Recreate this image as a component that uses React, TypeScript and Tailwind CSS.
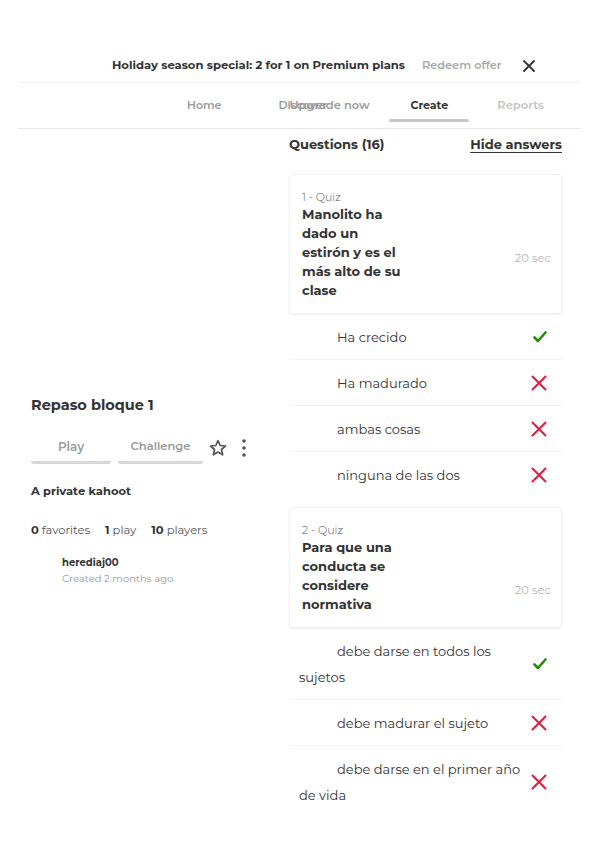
import React from 'react';

type Answer = { text: string; correct: boolean };
type Question = { n: number; title: string; timeClass: string; answers: Answer[] };

const questions: Question[] = [
  {
    n: 1,
    title: 'Manolito ha\ndado un\nestirón y es el\nmás alto de su\nclase',
    timeClass: 'mt-[28px]',
    answers: [
      { text: 'Ha crecido', correct: true },
      { text: 'Ha madurado', correct: false },
      { text: 'ambas cosas', correct: false },
      { text: 'ninguna de las dos', correct: false },
    ],
  },
  {
    n: 2,
    title: 'Para que una\nconducta se\nconsidere\nnormativa',
    timeClass: 'mt-[46px]',
    answers: [
      { text: 'debe darse en todos los sujetos', correct: true },
      { text: 'debe madurar el sujeto', correct: false },
      { text: 'debe darse en el primer año de vida', correct: false },
    ],
  },
];

function CheckIcon() {
  return (
    <svg width="16" height="16" viewBox="0 0 16 16" className="text-[#26890c]">
      <path d="M2.5 8.5 L6 12 L13.5 3.5" fill="none" stroke="currentColor" strokeWidth="2.6" strokeLinecap="round" strokeLinejoin="round" />
    </svg>
  );
}

function CrossIcon() {
  return (
    <svg width="18" height="18" viewBox="0 0 18 18" className="text-[#e21b3c]">
      <path d="M2.5 2.5 L15.5 15.5 M15.5 2.5 L2.5 15.5" fill="none" stroke="currentColor" strokeWidth="2" strokeLinecap="round" />
    </svg>
  );
}

function QuestionBlock({ q }: { q: Question }) {
  return (
    <div className="mb-[10px]">
      <div className="flex items-center justify-between border border-[#f0f0f0] rounded-[4px] shadow-[0_1px_2px_rgba(0,0,0,0.06)] pl-[12px] pr-[10px] pt-[14px] pb-[13px]">
        <div>
          <p className="text-[11px] leading-[16px] text-[#555] font-light">{q.n} - Quiz</p>
          <p className="w-[112px] whitespace-pre-line text-[13px] leading-[19px] font-bold text-[#333]">{q.title}</p>
        </div>
        <span className={`text-[11.5px] text-[#b5b5b5] ${q.timeClass}`}>20 sec</span>
      </div>
      {q.answers.map((a, i) => (
        <div
          key={i}
          className={`flex items-center justify-between pl-[10px] pr-[14px] py-[9.5px] ${i < q.answers.length - 1 ? 'border-b border-[#f2f2f2]' : ''}`}
        >
          <p className="flex-1 indent-[38px] text-[13px] leading-[26px] text-[#333] pr-[3px]">{a.text}</p>
          {a.correct ? <CheckIcon /> : <CrossIcon />}
        </div>
      ))}
    </div>
  );
}

export default function App() {
  return (
    <div className="w-[599px] min-h-[848px] bg-white text-[#333] font-['Montserrat','Open_Sans',sans-serif]">
      {/* Offer banner */}
      <div className="mx-[18px] mt-[49px] h-[34px] flex items-center whitespace-nowrap border-b border-[#f3f3f3] pl-[94px]">
        <span className="text-[11.6px] font-bold text-[#333]">Holiday season special: 2 for 1 on Premium plans</span>
        <span className="ml-[17px] text-[11.3px] font-semibold text-[#a8a8a8]">Redeem offer</span>
        <svg width="14" height="14" viewBox="0 0 14 14" className="ml-[21px] text-[#333]">
          <path d="M2 2 L12 12 M12 2 L2 12" stroke="currentColor" strokeWidth="1.8" strokeLinecap="round" />
        </svg>
      </div>

      {/* Nav */}
      <nav className="mx-[18px] h-[46px] flex items-center whitespace-nowrap border-b border-[#e8e8e8] text-[11px] font-semibold">
        <span className="ml-[169px] text-[#9a9a9a]">Home</span>
        <span className="relative ml-[57px] text-[#9a9a9a]">
          Discover
          <span className="absolute left-[11px] top-0 text-[11.5px] text-[#9a9a9a]">Upgrade now</span>
        </span>
        <span className="relative ml-[62px] w-[80px] text-center text-[#333] font-bold">
          Create
          <span className="absolute left-0 right-0 top-[22px] h-[3px] rounded-full bg-[#c8c8c8]" />
        </span>
        <span className="ml-[28px] text-[11.5px] text-[#c4c4c4]">Reports</span>
      </nav>

      <div className="flex mx-[18px]">
        {/* Left column */}
        <div className="w-[271px] pl-[13px] pt-[266px]">
          <h1 className="text-[14.5px] leading-[20px] font-bold text-[#333]">Repaso bloque 1</h1>
          <div className="flex items-center mt-[17px] gap-[7px]">
            <button className="w-[80px] h-[32px] text-[12px] font-semibold text-[#9a9a9a] border-b-[3px] border-[#d8d8d8] rounded-[3px]">Play</button>
            <button className="w-[85px] h-[32px] text-[11.5px] font-semibold text-[#9a9a9a] border-b-[3px] border-[#d8d8d8] rounded-[3px]">Challenge</button>
            <svg width="20" height="20" viewBox="0 0 24 24" className="ml-[-2px] text-[#555]">
              <path d="M12 3 L14.6 9 L21 9.6 L16.2 13.8 L17.6 20.2 L12 16.9 L6.4 20.2 L7.8 13.8 L3 9.6 L9.4 9 Z" fill="none" stroke="currentColor" strokeWidth="2" strokeLinejoin="round" />
            </svg>
            <svg width="8" height="20" viewBox="0 0 8 20" className="ml-[5px] text-[#555]">
              <circle cx="4" cy="3" r="1.8" fill="currentColor" />
              <circle cx="4" cy="10" r="1.8" fill="currentColor" />
              <circle cx="4" cy="17" r="1.8" fill="currentColor" />
            </svg>
          </div>
          <p className="mt-[19px] text-[11.5px] font-bold text-[#333]">A private kahoot</p>
          <p className="mt-[22px] text-[11.5px] text-[#555]">
            <b className="text-[#333]">0</b> favorites<span className="ml-[15px]"><b className="text-[#333]">1</b> play</span>
            <span className="ml-[15px]"><b className="text-[#333]">10</b> players</span>
          </p>
          <div className="mt-[15px] pl-[31px]">
            <p className="text-[10px] leading-[16px] font-bold text-[#333]">herediaj00</p>
            <p className="text-[10px] leading-[16px] text-[#999]">Created 2 months ago</p>
          </div>
        </div>

        {/* Right column */}
        <div className="w-[273px]">
          <div className="flex items-center justify-between h-[31px]">
            <h2 className="text-[13px] font-bold text-[#333]">Questions (16)</h2>
            <a className="text-[13px] font-bold text-[#333] underline underline-offset-[3px]">Hide answers</a>
          </div>
          <div className="mt-[14px]">
            {questions.map((q) => (
              <QuestionBlock key={q.n} q={q} />
            ))}
          </div>
        </div>
      </div>
    </div>
  );
}
